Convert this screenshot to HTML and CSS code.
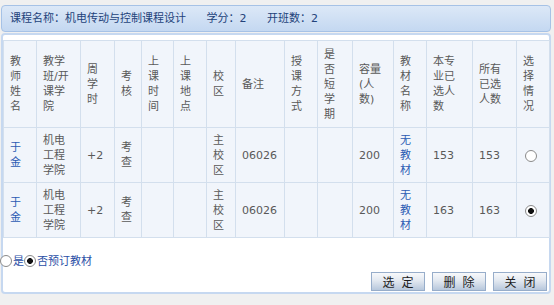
FILE: index.html
```html
<!DOCTYPE html>
<html lang="zh-CN">
<head>
    <meta charset="UTF-8">
    <title>选择教学班</title>
    <link rel="stylesheet" href="styles.css">
</head>
<body>
    <div class="wrap">
        <div class="course-bar">
            <span class="info">课程名称：机电传动与控制课程设计</span>
            <span class="info">学分：2</span>
            <span class="info">开班数：2</span>
        </div>

        <div class="panel">
            <table class="class-table">
                <colgroup>
                    <col style="width: 33px">
                    <col style="width: 44px">
                    <col style="width: 34px">
                    <col style="width: 27px">
                    <col style="width: 32px">
                    <col style="width: 33px">
                    <col style="width: 29px">
                    <col style="width: 49px">
                    <col style="width: 33px">
                    <col style="width: 35px">
                    <col style="width: 41px">
                    <col style="width: 33px">
                    <col style="width: 46px">
                    <col style="width: 44px">
                    <col style="width: 33px">
                </colgroup>
                <tr class="head-row">
                    <th><span class="ln">教</span><span class="ln">师</span><span class="ln">姓</span><span class="ln">名</span></th>
                    <th><span class="ln">教学</span><span class="ln">班/开</span><span class="ln">课学</span><span class="ln">院</span></th>
                    <th><span class="ln">周</span><span class="ln">学</span><span class="ln">时</span></th>
                    <th><span class="ln">考</span><span class="ln">核</span></th>
                    <th><span class="ln">上</span><span class="ln">课</span><span class="ln">时</span><span class="ln">间</span></th>
                    <th><span class="ln">上</span><span class="ln">课</span><span class="ln">地</span><span class="ln">点</span></th>
                    <th><span class="ln">校</span><span class="ln">区</span></th>
                    <th><span class="ln">备注</span></th>
                    <th><span class="ln">授</span><span class="ln">课</span><span class="ln">方</span><span class="ln">式</span></th>
                    <th><span class="ln">是</span><span class="ln">否</span><span class="ln">短</span><span class="ln">学</span><span class="ln">期</span></th>
                    <th><span class="ln">容量</span><span class="ln">(人</span><span class="ln">数)</span></th>
                    <th><span class="ln">教</span><span class="ln">材</span><span class="ln">名</span><span class="ln">称</span></th>
                    <th><span class="ln">本专</span><span class="ln">业已</span><span class="ln">选人</span><span class="ln">数</span></th>
                    <th><span class="ln">所有</span><span class="ln">已选</span><span class="ln">人数</span></th>
                    <th><span class="ln">选</span><span class="ln">择</span><span class="ln">情</span><span class="ln">况</span></th>
                </tr>
                <tr class="data-row">
                    <td><a href="#" class="link"><span class="ln">于</span><span class="ln">金</span></a></td>
                    <td><span class="ln">机电</span><span class="ln">工程</span><span class="ln">学院</span></td>
                    <td>+2</td>
                    <td><span class="ln">考</span><span class="ln">查</span></td>
                    <td></td>
                    <td></td>
                    <td><span class="ln">主</span><span class="ln">校</span><span class="ln">区</span></td>
                    <td>06026</td>
                    <td></td>
                    <td></td>
                    <td>200</td>
                    <td><a href="#" class="link"><span class="ln">无</span><span class="ln">教</span><span class="ln">材</span></a></td>
                    <td>153</td>
                    <td>153</td>
                    <td><input type="radio" name="jxb" class="radio"></td>
                </tr>
                <tr class="data-row">
                    <td><a href="#" class="link"><span class="ln">于</span><span class="ln">金</span></a></td>
                    <td><span class="ln">机电</span><span class="ln">工程</span><span class="ln">学院</span></td>
                    <td>+2</td>
                    <td><span class="ln">考</span><span class="ln">查</span></td>
                    <td></td>
                    <td></td>
                    <td><span class="ln">主</span><span class="ln">校</span><span class="ln">区</span></td>
                    <td>06026</td>
                    <td></td>
                    <td></td>
                    <td>200</td>
                    <td><a href="#" class="link"><span class="ln">无</span><span class="ln">教</span><span class="ln">材</span></a></td>
                    <td>163</td>
                    <td>163</td>
                    <td><input type="radio" name="jxb" class="radio" checked></td>
                </tr>
            </table>

            <div class="book-choice">
                <label><input type="radio" name="book" class="radio">是</label><label><input type="radio" name="book" class="radio" checked>否预订教材</label>
            </div>

            <div class="actions">
                <button class="btn">选定</button>
                <button class="btn">删除</button>
                <button class="btn">关闭</button>
            </div>
        </div>
    </div>
</body>
</html>
```

FILE: styles.css
```css
* {
    margin: 0;
    padding: 0;
    box-sizing: border-box;
}
body {
    background-color: #f0f0f0;
    font-family: "DejaVu Sans", "Noto Sans CJK SC", sans-serif;
    font-size: 11px;
    color: #555;
}
.wrap {
    width: 550px;
    margin-left: 1px;
    padding-top: 5px;
}
.course-bar {
    height: 27px;
    border: 1px solid #a6c2e6;
    border-radius: 4px;
    background: linear-gradient(#dce8f7, #c4d8f1);
    padding-left: 8px;
    line-height: 25px;
    color: #23427a;
}
.info {
    margin-right: 17px;
}
.panel {
    margin-top: 1px;
    height: 261px;
    border: 2px solid #c6d8f0;
    border-radius: 4px;
    background-color: #fff;
    padding-top: 5px;
}
.class-table {
    width: 546px;
    table-layout: fixed;
    border-collapse: collapse;
    background-color: #f1f5fb;
}
.class-table th,
.class-table td {
    border: 1px solid #d3dfed;
    padding: 0 2px 0 6px;
    text-align: left;
    vertical-align: middle;
    font-weight: normal;
    line-height: 15px;
    color: #595959;
    white-space: nowrap;
}
.ln {
    display: block;
}
.head-row {
    height: 87px;
}
.data-row {
    height: 55px;
}
.link {
    color: #2b5bb3;
    text-decoration: none;
}
.radio {
    appearance: none;
    display: inline-block;
    width: 12px;
    height: 12px;
    margin: 0 0 0 2px;
    border: 1px solid #8a8a8a;
    border-radius: 50%;
    background: #fff;
    vertical-align: middle;
}
.radio:checked {
    background: radial-gradient(circle, #111 0 2.6px, #fff 3.2px);
}
.book-choice {
    margin: 17px 0 0 -3px;
    height: 14px;
    line-height: 14px;
    color: #2b4fa6;
}
.book-choice .radio {
    margin: -2px 1px 0 0;
}
.actions {
    display: flex;
    justify-content: flex-end;
    gap: 7px;
    margin-top: 3px;
    padding-right: 2px;
}
.btn {
    width: 54px;
    height: 19px;
    border: 1px solid #97adca;
    background: linear-gradient(#f8f9fb, #e2e8f0 45%, #b7c7dc);
    font-family: "Noto Sans CJK SC", sans-serif;
    font-size: 12px;
    letter-spacing: 7px;
    padding-left: 7px;
    color: #1c1c1c;
    cursor: pointer;
}
```
